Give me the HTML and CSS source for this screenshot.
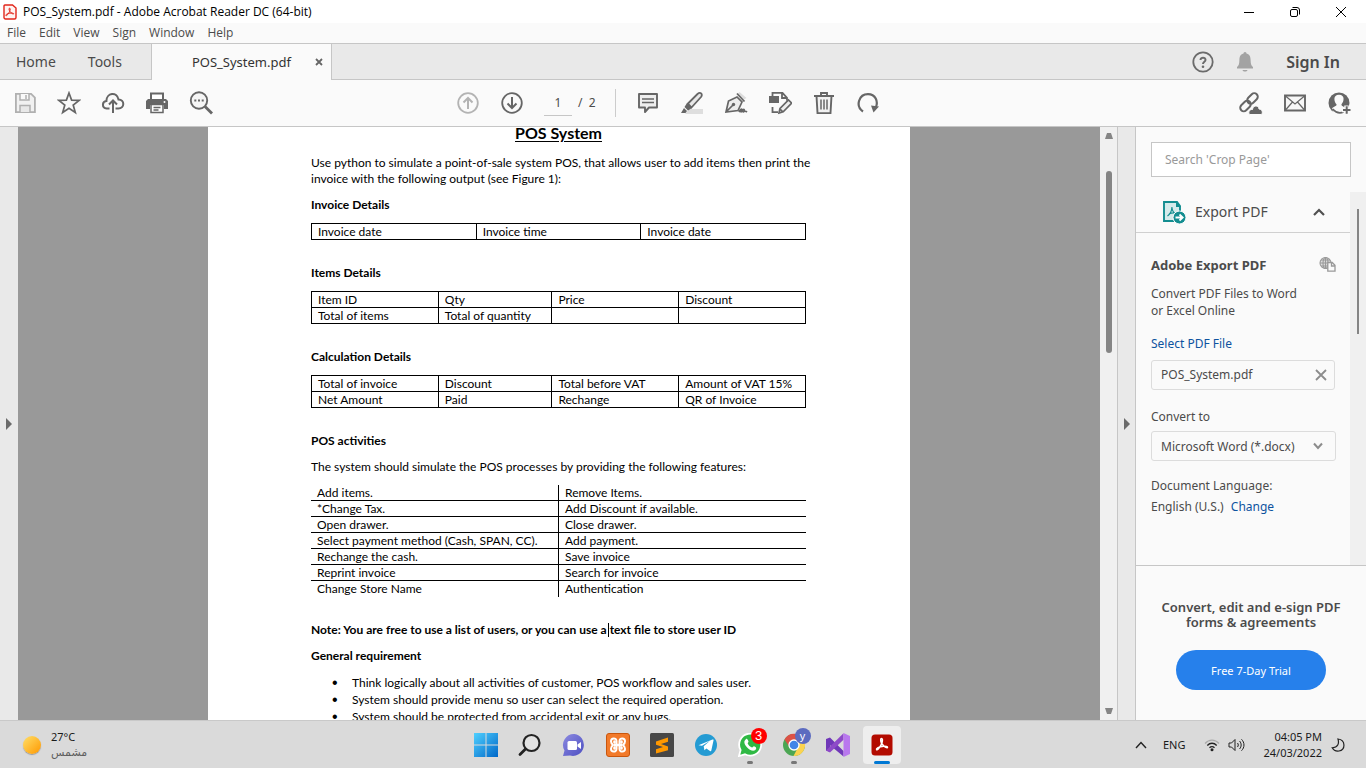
FILE: index.html
```html
<!DOCTYPE html>
<html lang="en">
<head>
<meta charset="utf-8">
<meta name="viewport" content="width=device-width, initial-scale=1">
<title>POS_System.pdf - Adobe Acrobat Reader DC (64-bit)</title>
<link rel="stylesheet" href="styles.css">
</head>
<body>
<header class="titlebar">
  <svg class="app-icon" viewBox="0 0 14 16"><path d="M1.500 1h8L13 4v9.500a1.500 1.500 0 0 1-1.500 1.500h-9A1.500 1.500 0 0 1 1 13.500V2a1 1 0 0 1 1-1z" fill="#fff4f2" stroke="#e2261b" stroke-width="1.400"/><path d="M6.600 4.200c1.600 0-.2 5.200-2.800 7.200-1.200.9-1.600-.5.200-1.400 2-1 6.800-1.400 6.700-.2-.1 1.300-4.700-2-4.700-4.800 0-.5.200-.8.600-.8z" fill="none" stroke="#e2261b"/></svg>
  <h1 class="window-title">POS_System.pdf - Adobe Acrobat Reader DC (64-bit)</h1>
  <div class="window-controls">
    <button aria-label="Minimize"><svg viewBox="0 0 12 12"><path d="M1 6.500h10" stroke="#000" fill="none"/></svg></button>
    <button aria-label="Restore"><svg viewBox="0 0 12 12"><rect x="1.500" y="3.500" width="7" height="7" rx="1.500" fill="none" stroke="#000"/><path d="M3.500 1.500H8a2.500 2.500 0 0 1 2.500 2.500v4.500" fill="none" stroke="#000"/></svg></button>
    <button aria-label="Close"><svg viewBox="0 0 12 12"><path d="M1 1l10 10M11 1L1 11" stroke="#000" fill="none"/></svg></button>
  </div>
</header>
<nav class="menubar">
  <button>File</button><button>Edit</button><button>View</button><button>Sign</button><button>Window</button><button>Help</button>
</nav>
<div class="tabs">
  <button class="tab">Home</button>
  <button class="tab tools">Tools</button>
  <div class="tab-active"><span>POS_System.pdf</span><button aria-label="Close tab"><svg viewBox="0 0 8 8"><path d="M1 1l6 6M7 1L1 7" stroke="#666" stroke-width="1.800"/></svg></button></div>
  <div class="account">
    <button aria-label="Help"><svg class="icon" viewBox="0 0 24 24"><circle cx="12" cy="12" r="9.700" fill="none" stroke="#6b6b6b" stroke-width="1.800"/><path d="M9.500 10c0-3.200 5.200-3 5 0-.1 1.700-2.500 1.800-2.500 4" fill="none" stroke="#6b6b6b" stroke-width="2"/><circle cx="12" cy="16.800" r="1.300" fill="#6b6b6b"/></svg></button>
    <button aria-label="Notifications"><svg class="icon" viewBox="0 0 24 24"><path d="M12 2a1.500 1.500 0 0 1 1.500 1.600C17 4.500 17.500 7.500 17.600 10c.1 4 .8 6 2.400 7v1.500H4V17c1.600-1 2.300-3 2.400-7 .1-2.500.6-5.500 4.100-6.400A1.500 1.500 0 0 1 12 2zM9.500 20h5c-.5 2-4.500 2-5 0z" fill="#a3a3a3"/></svg></button>
    <button class="sign-in">Sign In</button>
  </div>
</div>
<div class="toolbar">
  <div class="tool-group">
    <button aria-label="Save" disabled><svg class="icon" viewBox="0 0 24 24"><path d="M2.900 2.900h15.200l3.800 3.800v14.400h-19z" fill="#f1f1f1" stroke="#b0b0b0" stroke-width="1.800"/><path d="M7 3v6h9V3" fill="#fafafa" stroke="#b0b0b0" stroke-width="1.500"/><path d="M13 4v4" stroke="#b0b0b0" stroke-width="1.500"/><path d="M7 21v-6.500h10V21" fill="#e8e8e8" stroke="#b0b0b0" stroke-width="1.500"/></svg></button>
    <button aria-label="Star"><svg class="icon" viewBox="0 0 24 24"><path d="M12 2l2.600 7.100 7.600.3-6 4.700 2.100 7.300-6.300-4.200-6.300 4.200 2.100-7.300-6-4.700 7.600-.3z" fill="none" stroke="#666" stroke-width="1.700"/></svg></button>
    <button aria-label="Upload"><svg class="icon" viewBox="0 0 24 24"><path d="M8.500 17.500H5.600C.6 17 .9 10.500 5.400 10 5.500 1.500 16 .5 17.500 8.500c6.500.2 6.300 9-.1 9h-2.900" fill="none" stroke="#666" stroke-width="2"/><path d="M12 22V10M8 13.500L12 9.500l4 4" fill="none" stroke="#666" stroke-width="2"/></svg></button>
    <button aria-label="Print"><svg class="icon" viewBox="0 0 24 24"><path d="M6 8V2.500h12V8" fill="#fff" stroke="#666" stroke-width="2"/><path d="M3 8h18l2 2v8h-4v-4H5v4H1v-8z" fill="#666"/><path d="M6 13.500h12v8H6zM8.500 16.500h7M8.500 19h5" fill="#fff" stroke="#666" stroke-width="1.500"/><circle cx="19.500" cy="11" r="1" fill="#fff"/></svg></button>
    <button aria-label="Find"><svg class="icon" viewBox="0 0 24 24"><circle cx="10" cy="9.500" r="8.200" fill="#f5f5f5" stroke="#666" stroke-width="1.900"/><path d="M16 15.500l7 7" stroke="#666" stroke-width="2.800"/><path d="M5.300 9.500h2M9 9.500h2M12.700 9.500h2" stroke="#666" stroke-width="2"/></svg></button>
  </div>
  <div class="tool-group middle">
    <button aria-label="Previous page" disabled><svg class="icon" viewBox="0 0 24 24"><circle cx="12" cy="12" r="9.800" fill="none" stroke="#b3b3b3" stroke-width="1.800"/><path d="M12 18V7M7.500 11.500L12 7l4.500 4.500" fill="none" stroke="#b3b3b3" stroke-width="2"/></svg></button>
    <button aria-label="Next page"><svg class="icon" viewBox="0 0 24 24"><circle cx="12" cy="12" r="9.800" fill="none" stroke="#666" stroke-width="1.800"/><path d="M12 6v11M7.500 12.500L12 17l4.500-4.500" fill="none" stroke="#666" stroke-width="2"/></svg></button>
    <input class="page-number" aria-label="Page number" value="1"><span class="page-count">/&nbsp; 2</span>
    <span class="divider"></span>
    <button aria-label="Comment"><svg class="icon" viewBox="0 0 24 24"><path d="M3 3h18v13.500h-8L9 21v-4.500H3z" fill="#eee" stroke="#666" stroke-width="1.900" stroke-linejoin="round"/><path d="M6 8h12M6 11.500h12" stroke="#666" stroke-width="1.400"/></svg></button>
    <button aria-label="Highlight"><svg class="icon" viewBox="0 0 24 24"><path d="M9 18h14v5H5z" fill="#dedede"/><path d="M8 12.500L17.500 3c3-2.600 5.500.2 3.500 3L11.500 16.500z" fill="#e8e8e8" stroke="#666" stroke-width="1.800"/><path d="M7 12l5 5-4 2.500-3.500-3.500zM4 17l3 3-1.500 2H1z" fill="#666"/></svg></button>
    <button aria-label="Sign document"><svg class="icon" viewBox="0 0 24 24"><path d="M14 2.500l6 6 2.500-1.500-7-6z" fill="#ddd"/><path d="M2 21l2.500-11L13 6l5 5-4 8.500zM2 21l7-7" fill="#eee" stroke="#666" stroke-width="1.700"/><circle cx="9.500" cy="13.500" r="1.700" fill="#666"/><path d="M13 2.500l7.500 8M15 21c3-5 4-2.500 1.500.3 4-5 5-2.300 2 0 2.500-1.500 3-1.500 4.500-.3" fill="none" stroke="#666" stroke-width="1.800"/></svg></button>
    <button aria-label="Fill and edit"><svg class="icon" viewBox="0 0 24 24"><path d="M4.500 5V1.800h10l4.500 5v3M14 2v5h5M4.500 16v5.200H10" fill="none" stroke="#666" stroke-width="1.800"/><path d="M1 5h10v7H1z" fill="#666"/><path d="M11 22l1-4.500L20.500 9l3.200 3.200-8.500 8.600zM12 18l3 3" fill="#eee" stroke="#666" stroke-width="1.700"/></svg></button>
    <button aria-label="Delete"><svg class="icon" viewBox="0 0 24 24"><path d="M4.500 5l1 17.100h13L19.500 5" fill="#f1f1f1" stroke="#666" stroke-width="1.900"/><path d="M2 5h20M9 5V2h6v3" fill="none" stroke="#666" stroke-width="1.900"/><path d="M9 8.500v10M12 8.500v10M15 8.500v10" stroke="#666" stroke-width="1.500"/></svg></button>
    <button aria-label="Rotate"><svg class="icon" viewBox="0 0 24 24"><path d="M7 20.500C-1 15 3 3.200 12 3.200c7.500 0 10.500 7.300 7.800 13.300" fill="none" stroke="#666" stroke-width="2.200"/><path d="M15 14.500l8 1-5.500 6z" fill="#666"/></svg></button>
  </div>
  <div class="tool-group share">
    <button aria-label="Share link"><svg class="icon" viewBox="0 0 24 24"><g fill="none" stroke="#666" stroke-width="2"><rect x="-6" y="-3.500" width="12" height="7" rx="3.500" transform="translate(6.500 15) rotate(-45)"/><rect x="-6" y="-3.500" width="12" height="7" rx="3.500" transform="translate(13.500 7.500) rotate(-45)"/></g><path d="M10.500 23.500c-2-3 1-5.500 3-5 .8-5 6.500-4 6.500-.5 4 .2 4 5.500 2 5.500z" fill="#666" stroke="#fafafa"/></svg></button>
    <button aria-label="Email"><svg class="icon" viewBox="0 0 24 24"><path d="M2 4.500h20v15H2z" fill="#f7f7f7" stroke="#666" stroke-width="1.900"/><path d="M2.500 5l9.500 8 9.500-8M2.500 19L9.500 11M21.500 19L14.500 11" fill="none" stroke="#666" stroke-width="1.200"/></svg></button>
    <button aria-label="Add people"><svg class="icon" viewBox="0 0 24 24"><circle cx="12" cy="12" r="10.500" fill="#666"/><path d="M12 3.700c6.300 0 5 7 2.500 9.500-.5 2.300 3 2 3.500 3.800v6H7.500L5 18c.6-2.700 5-2.200 4.500-4.700C7 10.700 5.700 3.700 12 3.700z" fill="#fafafa"/><path d="M5.500 18c4 4.300 8 4.500 11 3" fill="none" stroke="#666" stroke-width="1.800"/><path d="M15 19h9M19.500 14.500v9" stroke="#fafafa" stroke-width="4.500"/><path d="M16 19h7.500M19.700 15.300v7.500" stroke="#666" stroke-width="2"/></svg></button>
  </div>
</div>
<main class="workspace">
  <button class="rail" aria-label="Open navigation pane"><svg viewBox="0 0 6 12"><path d="M0 0l6 6-6 6z" fill="#6b6b6b"/></svg></button>
  <section class="viewer">
    <article class="page">
      <h2 class="doc-title">POS System</h2>
      <p class="lead">Use python to simulate a point-of-sale system POS, that allows user to add items then print the<br>invoice with the following output (see Figure 1):</p>
      <h3>Invoice Details</h3>
      <table class="grid"><tr><td>Invoice date</td><td>Invoice time</td><td>Invoice date</td></tr></table>
      <h3>Items Details</h3>
      <table class="grid"><colgroup><col><col class="narrow"><col><col></colgroup><tr><td>Item ID</td><td>Qty</td><td>Price</td><td>Discount</td></tr><tr><td>Total of items</td><td>Total of quantity</td><td></td><td></td></tr></table>
      <h3>Calculation Details</h3>
      <table class="grid"><colgroup><col><col class="narrow"><col><col></colgroup><tr><td>Total of invoice</td><td>Discount</td><td>Total before VAT</td><td>Amount of VAT 15%</td></tr><tr><td>Net Amount</td><td>Paid</td><td>Rechange</td><td>QR of Invoice</td></tr></table>
      <h3>POS activities</h3>
      <p>The system should simulate the POS processes by providing the following features:</p>
      <table class="features">
        <tr><td>Add items.</td><td>Remove Items.</td></tr>
        <tr><td>*Change Tax.</td><td>Add Discount if available.</td></tr>
        <tr><td>Open drawer.</td><td>Close drawer.</td></tr>
        <tr><td>Select payment method (Cash, SPAN, CC).</td><td>Add payment.</td></tr>
        <tr><td>Rechange the cash.</td><td>Save invoice</td></tr>
        <tr><td>Reprint invoice</td><td>Search for invoice</td></tr>
        <tr><td>Change Store Name</td><td>Authentication</td></tr>
      </table>
      <h3>Note: You are free to use a list of users, or you can use a<span class="caret"></span>text file to store user ID</h3>
      <h3>General requirement</h3>
      <ul>
        <li>Think logically about all activities of customer, POS workflow and sales user.</li>
        <li>System should provide menu so user can select the required operation.</li>
        <li>System should be protected from accidental exit or any bugs.</li>
      </ul>
    </article>
  </section>
  <div class="scrollbar">
    <svg viewBox="0 0 8 6"><path d="M0 6l2-6h4l2 6z" fill="#858585"/></svg>
    <div class="track"><div class="thumb"></div></div>
    <svg viewBox="0 0 8 6"><path d="M0 0l2 6h4l2-6z" fill="#858585"/></svg>
  </div>
  <button class="rail right" aria-label="Toggle tools pane"><svg viewBox="0 0 6 12"><path d="M0 0l6 6-6 6z" fill="#6b6b6b"/></svg></button>
  <aside class="panel">
    <div class="search"><input aria-label="Search tools" placeholder="Search 'Crop Page'"></div>
    <div class="panel-scroll">
      <div class="panel-content">
        <button class="export-head">
          <svg class="export-icon" viewBox="0 0 24 24"><path d="M2 2h13l3 4v15H2z" fill="#d5ebeb" stroke="#138d90" stroke-width="1.900"/><path d="M14 1v6h5z" fill="#138d90"/><path d="M10 7c-.3 4-1.500 7-4.500 9M10 8c.3 3 2 5.500 5 6.500M7 14c2-1 4-1.300 6-1" fill="none" stroke="#138d90" stroke-width="1.200"/><circle cx="17.500" cy="17.500" r="6.500" fill="#138d90" stroke="#fafafa"/><path d="M13.500 17.500h6M17.500 14.500l3.200 3-3.200 3" fill="none" stroke="#fff" stroke-width="1.800"/></svg>
          <span>Export PDF</span>
          <svg class="chevron-up" viewBox="0 0 12 8"><path d="M1 7l5-5 5 5" fill="none" stroke="#505050" stroke-width="2.200"/></svg>
        </button>
        <div class="export-body">
          <div class="export-title"><h2>Adobe Export PDF</h2><svg viewBox="0 0 17 17"><g fill="none" stroke="#999" stroke-width="1.100"><circle cx="6.500" cy="7" r="5.500" fill="#ddd"/><ellipse cx="6.500" cy="7" rx="2.500" ry="5.500"/><path d="M1 7h11M2 4h9M2 10h9M6.500 1v12"/></g><path d="M8.800 6.500h4.400L16 9.300v5.900H8.800zM12.500 6.500V10H16" fill="#fafafa" stroke="#999" stroke-width="1.300"/></svg></div>
          <p class="intro">Convert PDF Files to Word<br>or Excel Online</p>
          <a class="select-file" href="#file">Select PDF File</a>
          <div class="file" id="file"><span>POS_System.pdf</span><button aria-label="Remove file"><svg viewBox="0 0 12 12"><path d="M1 1l10 10M11 1L1 11" stroke="#8c8c8c" stroke-width="1.800"/></svg></button></div>
          <label for="format">Convert to</label>
          <div class="format"><select id="format"><option>Microsoft Word (*.docx)</option></select><svg viewBox="0 0 12 8"><path d="M2 1.500l4 4.500 4-4.500" fill="none" stroke="#8c8c8c" stroke-width="2"/></svg></div>
          <p class="language">Document Language:</p>
          <p class="language-value">English (U.S.) <a href="#language">Change</a></p>
        </div>
      </div>
      <div class="panel-bar"><div class="panel-thumb"></div></div>
    </div>
    <footer class="promo"><p>Convert, edit and e-sign PDF<br>forms &amp; agreements</p><button>Free 7-Day Trial</button></footer>
  </aside>
</main>
<footer class="taskbar">
  <div class="weather"><span class="sun"></span><div><div>27°C</div><div class="condition" lang="ar" dir="rtl">مشمس</div></div></div>
  <nav class="apps">
    <button aria-label="Start"><svg viewBox="0 0 24 24"><defs><linearGradient id="win" x2="1" y2="1"><stop stop-color="#4fd0ff"/><stop offset="1" stop-color="#0067c8"/></linearGradient></defs><path d="M0 0h11.500v11.500H0zM12.500 0H24v11.500H12.500zM0 12.500h11.500V24H0zM12.500 12.500H24V24H12.500z" fill="url(#win)"/></svg></button>
    <button aria-label="Search"><svg viewBox="0 0 24 24"><circle cx="13.500" cy="10" r="8" fill="#e2e2e2" stroke="#222" stroke-width="2.200"/><path d="M7.500 16l-5.500 5.500" stroke="#222" stroke-width="2.800" stroke-linecap="round"/></svg></button>
    <button aria-label="Chat"><svg viewBox="0 0 24 24"><defs><linearGradient id="chat" x2="1" y2="1"><stop stop-color="#8c8ae0"/><stop offset="1" stop-color="#4d4fc2"/></linearGradient></defs><path d="M12.500 1A11 11 0 1 1 8 22.500L1 23l1.500-5.500A11 11 0 0 1 12.500 1z" fill="url(#chat)"/><rect x="5.500" y="8" width="9.500" height="9" rx="1.500" fill="#fff"/><path d="M15.500 11.500l3.500-2.500v7l-3.500-2.500z" fill="#fff"/></svg></button>
    <button aria-label="XAMPP"><svg viewBox="0 0 24 24"><rect x=".5" y=".5" width="23" height="23" rx="2.500" fill="#f27a2a" stroke="#c9560d"/><path d="M8.500 9.500v-1M15.500 9.500v-1M8.500 15.500v-1M15.500 15.500v-1M9 12h6" stroke="#fff" stroke-width="2.600" stroke-linecap="round"/><path d="M10.500 12V8c0-3.500-5.500-3.500-5.500.3 0 1.700.8 2.700 2 3.700-1.200 1-2 2-2 3.700 0 3.800 5.500 3.800 5.500.3zM13.500 12V8c0-3.500 5.500-3.500 5.500.3 0 1.700-.8 2.700-2 3.700 1.200 1 2 2 2 3.700 0 3.800-5.500 3.800-5.500.3z" fill="none" stroke="#fff" stroke-width="2"/></svg></button>
    <button aria-label="Sublime Text"><svg viewBox="0 0 24 24"><rect width="24" height="24" rx="1.500" fill="#474747"/><path d="M6 8.500L18 4.500v4.300l-7 2.300 7 2.300v3.800L6 20.500v-4.300l7-2.300-7-2.200z" fill="#ff9800"/></svg></button>
    <button aria-label="Telegram"><svg viewBox="0 0 24 24"><circle cx="12" cy="12" r="11" fill="#249bd3"/><path d="M4.500 12.200L18.500 6.500c1-.3 1.200.1 1 1l-2.200 10c-.2.800-.6 1-1.300.6l-3.600-2.700-2 1.900-.7-4.100 6.300-5.400-8 4.900z" fill="#fff"/></svg></button>
    <button class="running" aria-label="WhatsApp, 3 notifications"><svg viewBox="0 0 24 24"><path d="M1 23l1.600-6A11 11 0 1 1 7 21.300z" fill="#2fb944" stroke="#fff" stroke-width="1.800"/><path d="M8 6c1-1 2 .8 2.500 2.500.1.700-.9 1.500-.8 2 .8 2 2.300 3.300 4.300 4 .7.200 1.300-1.300 2-1.200 3.500 1.200 2.200 3.700.3 4.300C11.500 18.500 5.200 11.500 6.500 8z" fill="#fff"/></svg><span class="badge red">3</span></button>
    <button class="running" aria-label="Chrome"><svg viewBox="0 0 24 24"><circle cx="12" cy="12" r="11" fill="#4ca653"/><path d="M2.500 6.500A11 11 0 0 1 22.500 8H12l-4.500 6z" fill="#dc5147"/><path d="M12 8h10.300A11 11 0 0 1 11.500 23l4.700-9z" fill="#fcd34f"/><circle cx="12" cy="12" r="5" fill="#4285e8" stroke="#fff" stroke-width="1.300"/></svg><span class="badge blue">y</span></button>
    <button aria-label="Visual Studio"><svg viewBox="0 0 24 24"><path d="M0 6l4-1.500L17.500 18v5.500L4 12.300V19l-4-1.500z" fill="#7038b8"/><path d="M0 17.500L17.500.3v6.500L4 19.500z" fill="#8e4ac8"/><path d="M17.500 0L24 3v18l-6.500 3z" fill="#b978ee"/></svg></button>
    <button class="active" aria-label="Adobe Acrobat"><svg viewBox="0 0 24 24"><rect x="1.500" y="1.500" width="21" height="21" rx="3.500" fill="#b30b00"/><path d="M11.500 5.500c2 0 .7 6.500-3.200 10.500-1.700 1.600-3 .3-.3-1.400 3-1.600 9.500-2 9.500-.4 0 2-6.800-2.200-6.800-7.400 0-.8.300-1.300.8-1.300z" fill="none" stroke="#fff" stroke-width="1.500"/></svg></button>
  </nav>
  <div class="tray">
    <svg class="tray-up" viewBox="0 0 12 8"><path d="M1 7l5-5.500L11 7" fill="none" stroke="#222" stroke-width="1.400"/></svg>
    <span class="ime">ENG</span>
    <svg class="wifi" viewBox="0 0 16 14"><g fill="none"><path d="M1 5.500c4-4.500 10-4.500 14 0" stroke="#aaa" stroke-width="1.200"/><path d="M3.300 7.500c2.700-3 6.700-3 9.400 0M5.500 9.800c1.500-1.700 3.500-1.700 5 0" stroke="#222" stroke-width="1.300"/></g><circle cx="8" cy="11.800" r="1.500" fill="#222"/></svg>
    <svg class="volume" viewBox="0 0 17 14"><path d="M1 5h2.500L7 1.500v11L3.500 9H1zM9.500 5c1 1.300 1 2.700 0 4M11.500 3c2.200 2.300 2.200 5.700 0 8M13.500 1.300c3.300 3.300 3.300 8.100 0 11.400" fill="none" stroke="#222"/></svg>
    <div class="clock"><div>04:05 PM</div><div>24/03/2022</div></div>
    <svg class="moon" viewBox="0 0 14 14"><path d="M7 1c8 1 7.500 11 1 12-3 .4-5.500-.8-6.800-3.200C7 9.500 8.300 5.500 7 1z" fill="none" stroke="#222" stroke-width="1.200"/></svg>
  </div>
</footer>
</body>
</html>
```
FILE: styles.css
```css
* { box-sizing: border-box; }
html, body { height: 100%; }
body {
  margin: 0;
  display: flex;
  flex-direction: column;
  overflow: hidden;
  background: #fafafa;
  color: #4b4b4b;
  font: 12px/16px "Noto Sans", "Open Sans", sans-serif;
}
button { border: 0; padding: 0; background: none; color: inherit; font: inherit; }
h1, h2, h3, p, ul { margin: 0; }
svg { display: block; flex: none; }
a { color: #0d539f; text-decoration: none; }

.titlebar { display: flex; align-items: center; flex: none; height: 23px; padding: 0 2px 0 3px; background: #fff; color: #000; }
.app-icon { width: 14px; height: 16px; margin-right: 6px; }
.window-title { font: 12px/16px "Open Sans", sans-serif; }
.window-controls { display: flex; margin-left: auto; }
.window-controls button { display: grid; place-items: center; width: 46px; height: 22px; }
.window-controls svg { width: 12px; height: 12px; }
.menubar { display: flex; flex: none; gap: 13px; height: 20px; padding-left: 7px; font-family: "Open Sans", sans-serif; }

.tabs { display: flex; flex: none; height: 37px; border: 1px solid #c6c6c6; border-width: 1px 0; background: #e9e9e9; }
.tab { padding-left: 16px; font-size: 14px; }
.tools { padding: 0 29px 0 32px; }
.tab-active { display: flex; align-items: center; justify-content: space-between; width: 181px; margin-bottom: -1px; padding: 0 8px 0 40px; border: 1px solid #c6c6c6; border-width: 0 1px; background: #fafafa; font-size: 13px; color: #333; }
.tab-active svg { width: 8px; height: 8px; }
.account { display: flex; align-items: center; gap: 18px; margin-left: auto; padding-right: 26px; }
.icon { width: 24px; height: 24px; }
.sign-in { padding-left: 11px; font-size: 16px; font-weight: 600; }

.toolbar { display: grid; grid-template-columns: 1fr auto 1fr; align-items: center; flex: none; height: 47px; border-bottom: 1px solid #c6c6c6; }
.tool-group { display: flex; align-items: center; padding-left: 3px; }
.tool-group button { display: grid; place-items: center; width: 44px; height: 44px; }
.tool-group.middle { padding: 0 30px 0 0; }
.page-number { width: 28px; height: 26px; margin-left: 10px; padding: 0; border: 0; border-bottom: 1px solid #c6c6c6; background: none; color: #4b4b4b; font: inherit; text-align: center; }
.page-count { width: 43px; padding-left: 6px; }
.divider { width: 1px; height: 28px; margin-right: 10px; background: #ccc; }
.share { justify-content: flex-end; padding-right: 5px; }

.workspace { display: flex; flex: 1; min-height: 0; }
.rail { display: grid; place-items: center; flex: none; width: 18px; background: #e9e9e9; }
.rail svg { width: 6px; height: 12px; }
.rail.right { width: 19px; border: 1px solid #c6c6c6; border-width: 0 1px; }
.viewer { flex: 1; min-width: 0; overflow: hidden; background: #999; }
.page { width: 64%; min-width: 702px; min-height: 100%; margin: 0 auto; padding: 0 104px 0 103px; background: #fff; color: #000; font: 12px/16px Lato, Carlito, sans-serif; }
.page h3 { margin-bottom: 10px; font-size: 12px; line-height: 16px; }
.page p { margin-bottom: 10px; }
.page .lead { white-space: nowrap; }
.page .doc-title { margin-bottom: 16px; font-size: 16px; line-height: 12px; text-align: center; text-decoration: underline; text-underline-offset: 2px; }
.page table { width: 100%; margin-bottom: 25px; border-collapse: collapse; table-layout: fixed; }
.page td { height: 16px; padding: 0 6px; line-height: 15px; }
.grid td { border: 1px solid #000; }
.narrow { width: 23%; }
.features tr:first-child td { height: 15px; }
.features td + td { border-left: 1px solid #000; }
.features tr + tr td { border-top: 1px solid #000; }
.caret { display: inline-block; width: 1px; height: 14px; margin: 0 1px; background: #000; vertical-align: middle; }
.page ul { padding-left: 41px; line-height: 17px; list-style: none; }
.page li { display: flex; height: 17px; }
.page li::before { content: "•"; width: 20px; margin-left: -20px; font: 16px/17px "Liberation Sans", sans-serif; }

.scrollbar { display: flex; flex-direction: column; align-items: center; gap: 32px; flex: none; width: 17px; padding: 6px 0; background: #f0f0f0; }
.scrollbar svg { width: 8px; height: 6px; }
.track { flex: 1; width: 6px; }
.thumb { width: 6px; height: 36%; border-radius: 3px; background: #858585; }

.panel { display: flex; flex-direction: column; flex: none; width: 230px; font-size: 12px; }
.search { padding: 15px; }
.search input { width: 100%; height: 35px; padding: 0 13px; border: 1px solid #c6c6c6; background: #fff; font: inherit; }
.search input::placeholder { color: #999; opacity: 1; }
.panel-scroll { display: flex; flex: 1; min-height: 0; }
.panel-content { flex: 1; }
.export-head { display: flex; align-items: center; gap: 9px; width: 100%; height: 41px; padding: 0 25px 0 26px; border-bottom: 1px solid #d0d0d0; font-size: 14px; }
.export-icon { width: 24px; height: 24px; }
.chevron-up { width: 12px; height: 8px; margin-left: auto; }
.export-body { padding: 23px 14px 0 15px; }
.export-title { display: flex; justify-content: space-between; margin-bottom: 11px; }
.export-title h2 { font-size: 13px; line-height: 18px; }
.export-title svg { width: 17px; height: 17px; }
.intro { margin-bottom: 16px; line-height: 17px; }
.select-file { display: block; margin-bottom: 7px; line-height: 18px; }
.file { display: flex; align-items: center; justify-content: space-between; height: 30px; margin: 0 1px 18px 0; padding: 0 7px 0 9px; border: 1px solid #dcdcdc; border-radius: 3px; }
.file svg { width: 12px; height: 12px; }
label { display: block; margin-bottom: 6px; line-height: 17px; }
.format { display: grid; align-items: center; }
.format select, .format svg { grid-area: 1 / 1; }
.format select { width: 100%; height: 30px; padding: 2px 9px 0; border: 1px solid #dcdcdc; border-radius: 3px; appearance: none; background: #fafafa; color: inherit; font: inherit; }
.format svg { justify-self: end; width: 12px; height: 8px; margin-right: 12px; pointer-events: none; }
.language { margin: 16px 0 4px; line-height: 17px; }
.language-value { line-height: 17px; }
.language-value a { margin-left: 4px; }
.panel-bar { width: 16px; padding: 17px 7px; background: #f0f0f0; }
.panel-thumb { width: 2px; height: 37%; background: #858585; }
.promo { flex: none; padding: 34px 15px 30px; border-top: 1px solid #c6c6c6; font-size: 13px; font-weight: 600; line-height: 15px; text-align: center; }
.promo p { margin-bottom: 20px; }
.promo button { width: 150px; height: 40px; border-radius: 20px; background: #2680eb; color: #fff; font-weight: 400; font-size: 11px; }

.taskbar { display: grid; grid-template-columns: 1fr auto 1fr; flex: none; height: 48px; border-top: 1px solid #c9c9c9; background: #dadada; color: #1b1b1b; font-size: 11px; line-height: 16px; }
.weather { display: flex; align-items: center; gap: 10px; padding-left: 23px; }
.sun { width: 18px; height: 18px; border-radius: 50%; background: linear-gradient(135deg, #ffdf68, #ff9800); box-shadow: 0 1px 1px #999; }
.condition { color: #5e5e5e; font-family: "DejaVu Sans", sans-serif; font-size: 11px; }
.apps { display: flex; align-items: center; gap: 6px; padding-left: 1px; }
.apps button { position: relative; display: grid; place-items: center; width: 38px; height: 38px; border-radius: 4px; }
.apps svg { width: 24px; height: 24px; }
.badge { position: absolute; top: 2px; right: 2px; width: 16px; height: 16px; border-radius: 50%; color: #fff; font: 13px/16px "Liberation Sans", sans-serif; text-align: center; }
.red { background: #f00; }
.blue { background: #5c6bc0; font-size: 11px; }
.running::after, .active::after { content: ""; position: absolute; bottom: 0; left: 16px; width: 6px; height: 3px; border-radius: 2px; background: #777; }
.apps .active { background: #eee; }
.apps .active::after { left: 11px; width: 16px; background: #0078d4; }
.tray { display: flex; align-items: center; justify-content: flex-end; padding-right: 21px; }
.tray-up { width: 12px; height: 8px; margin-right: 16px; }
.ime { margin-right: 19px; }
.wifi { width: 16px; height: 14px; margin-right: 8px; }
.volume { width: 17px; height: 14px; margin-right: 18px; }
.clock { margin-right: 9px; text-align: right; }
.moon { width: 14px; height: 14px; }
```
